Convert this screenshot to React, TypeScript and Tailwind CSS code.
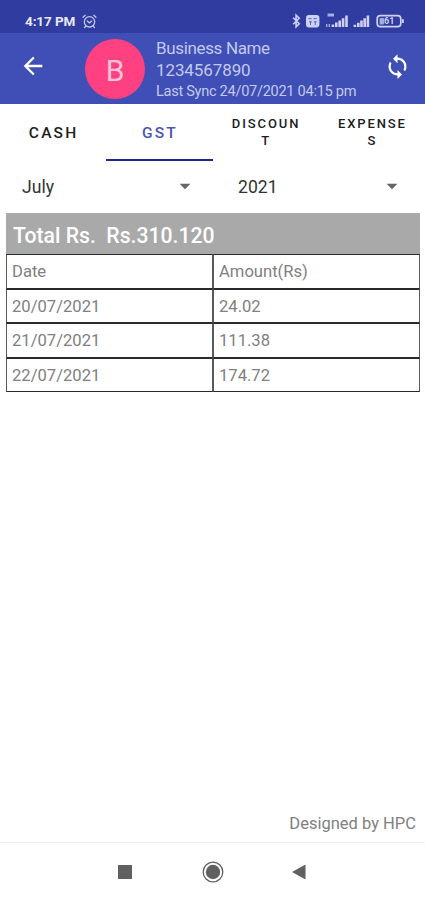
import React, { useState } from 'react';
import { MdArrowBack, MdArrowDropDown, MdSync } from 'react-icons/md';
import { clsx } from 'clsx';

const tabs = ['CASH', 'GST', 'DISCOUNT', 'EXPENSES'];

const rows = [
  { date: '20/07/2021', amount: '24.02' },
  { date: '21/07/2021', amount: '111.38' },
  { date: '22/07/2021', amount: '174.72' },
];

function AlarmIcon() {
  return (
    <svg className="w-[15px] h-[15px] ml-[7px]" viewBox="0 0 15 15" fill="none" stroke="#c3c9ee" strokeWidth="1.3" strokeLinecap="round">
      <circle cx="7.5" cy="7.8" r="5.2" />
      <path d="M5.2 7l2.3 1.8L9.8 7M1 3.2L3.2 1.3M14 3.2L11.8 1.3M3.6 12.2l-1 1.3M11.4 12.2l1 1.3" />
    </svg>
  );
}

function StatusIcons() {
  return (
    <svg className="w-[113px] h-4" viewBox="0 0 113 16" fill="#ccd2f4">
      {/* Bluetooth */}
      <path d="M1.2 4.8l6 6-3.1 3V2.2l3.1 3-6 6" fill="none" stroke="#ccd2f4" strokeWidth="1.6" />
      {/* VoLTE badge */}
      <rect x="14" y="2" width="13.4" height="12.4" rx="2.8" />
      <path d="M16.5 5.6h3.2M21.5 5.6h3.2M17 8.8h3M21.8 8.8h3M18.5 9v3M23.2 9v3" stroke="#5a65ba" strokeWidth="1" />
      {/* First sim, 4G */}
      <path d="M35.5 0.5h6.5v3h-6.5z" opacity=".75" />
      <path d="M34 11h1.4v3H34zM36.6 11H38v3h-1.4z" opacity=".75" />
      <path d="M39.6 11.4h2.6V14h-2.6zM43 9.6h2.6V14H43zM46.4 7.6h2.6V14h-2.6zM49.8 5.2h2.6V14h-2.6zM53.2 2.6h2.6V14h-2.6z" />
      {/* Second sim */}
      <path d="M61.6 11.8h2.6V14h-2.6zM65 9.8h2.6V14H65zM68.2 7.6h2.6V14h-2.6zM71.4 5.2H74V14h-2.6zM74.6 2.6h2.6V14h-2.6z" />
      {/* Battery */}
      <rect x="85.2" y="2.7" width="23.6" height="11" rx="3.2" fill="none" stroke="#ccd2f4" strokeWidth="1.7" />
      <rect x="87.6" y="5" width="4.4" height="6.4" rx="1" fill="#a4ace0" />
      <path d="M110 6.2h1.8v3.8H110z" />
      <text x="97.2" y="11.4" textAnchor="middle" fontSize="9" fontWeight="700">61</text>
    </svg>
  );
}

function Dropdown({ value, className }: { value: string; className?: string }) {
  return (
    <button className={clsx('flex items-center justify-between text-left text-[17.6px] text-[#333]', className)}>
      {value}
      <MdArrowDropDown className="w-[26px] h-[26px] mb-[3px] text-[#666]" />
    </button>
  );
}

function Cell({ children }: { children: React.ReactNode }) {
  return (
    <div className="flex items-center border border-x-[#5a5a5a] border-y-[#2a2a2a] pl-[5px] pt-[3px]">{children}</div>
  );
}

export default function App() {
  const [active, setActive] = useState('GST');

  return (
    <div className="flex flex-col w-[425px] h-[900px] bg-white overflow-hidden font-[Roboto,sans-serif]">
      {/* Status bar */}
      <div className="flex items-center h-[33px] pl-[25px] pr-[20px] pt-[9px] bg-[#303c9f] shrink-0">
        <span className="text-[13.5px] leading-4 tracking-[-0.1px] font-bold text-[#e6e9fa]">4:17 PM</span>
        <AlarmIcon />
        <div className="ml-auto">
          <StatusIcons />
        </div>
      </div>

      {/* App bar */}
      <header className="flex items-center h-[71px] pl-[19px] pr-[14px] bg-[#3f4fb5] shrink-0">
        <MdArrowBack className="w-7 h-7 mb-[5px] text-white" />
        <div className="flex items-center justify-center w-[60px] h-[60px] ml-[38px] pt-[3px] rounded-full bg-[#ff4081] text-[30px] text-[#ffc4d9]">B</div>
        <div className="ml-[11px] text-[#c3c9ee] whitespace-nowrap">
          <div className="text-[17px] leading-[22px] tracking-[-0.35px]">Business Name</div>
          <div className="text-[17px] leading-[22px] tracking-[-0.1px]">1234567890</div>
          <div className="text-[14.6px] leading-[20px] tracking-[-0.3px]">Last Sync 24/07/2021 04:15 pm</div>
        </div>
        <MdSync className="w-[27px] h-[27px] ml-auto mb-[5px] text-white" />
      </header>

      {/* Tabs */}
      <nav className="grid grid-cols-4 h-[57px] shrink-0">
        {tabs.map((tab) => (
          <button key={tab} onClick={() => setActive(tab)}
            className={clsx('flex items-center justify-center pl-px border-b-2 font-medium text-center',
              tab.length > 6 ? 'text-[13px] leading-[17px] tracking-[1.9px] pt-px' : 'text-[15.5px] tracking-[2.2px] pt-[4px]',
              active === tab ? 'border-[#1c2590] text-[#4a55b0]' : 'border-transparent text-[#1c1c1c]')}>
            <span className="w-[72px] break-all">{tab}</span>
          </button>
        ))}
      </nav>

      {/* Month and year */}
      <div className="flex h-[52px] pl-[22px] pt-px shrink-0">
        <Dropdown value="July" className="w-[176px]" />
        <Dropdown value="2021" className="w-[167px] ml-[40px]" />
      </div>

      {/* Totals table */}
      <section className="ml-[6px] mr-[5px] text-[16.6px] text-[#808080]">
        <div className="flex items-center h-[41px] pl-[7px] pt-[5px] bg-[#a9a9a9] text-[21.2px] font-medium text-white whitespace-pre">Total Rs.  Rs.310.120</div>
        <div className="grid grid-cols-2 auto-rows-[34.5px]">
          <Cell>Date</Cell>
          <Cell>Amount(Rs)</Cell>
          {rows.map((row) => (
            <React.Fragment key={row.date}>
              <Cell>{row.date}</Cell>
              <Cell>{row.amount}</Cell>
            </React.Fragment>
          ))}
        </div>
      </section>

      <footer className="mt-auto pr-[9px] pb-[7px] text-right text-[16.5px] leading-[22px] text-[#808080]">Designed by HPC</footer>

      {/* System navigation */}
      <div className="flex items-center h-[58px] pl-[118px] pt-px border-t border-[#f1f1f1] text-[#606060] shrink-0">
        <div className="w-[14px] h-[14px] bg-[#606060]" />
        <svg className="w-[22px] h-[22px] ml-[70px]" viewBox="0 0 22 22">
          <circle cx="11" cy="11" r="9.8" fill="none" stroke="currentColor" strokeWidth="1.3" />
          <circle cx="11" cy="11" r="7.2" fill="currentColor" />
        </svg>
        <svg className="w-[14px] h-4 ml-[68px]" viewBox="0 0 14 16" fill="currentColor">
          <path d="M13.5 .5v15L0 8z" />
        </svg>
      </div>
    </div>
  );
}
